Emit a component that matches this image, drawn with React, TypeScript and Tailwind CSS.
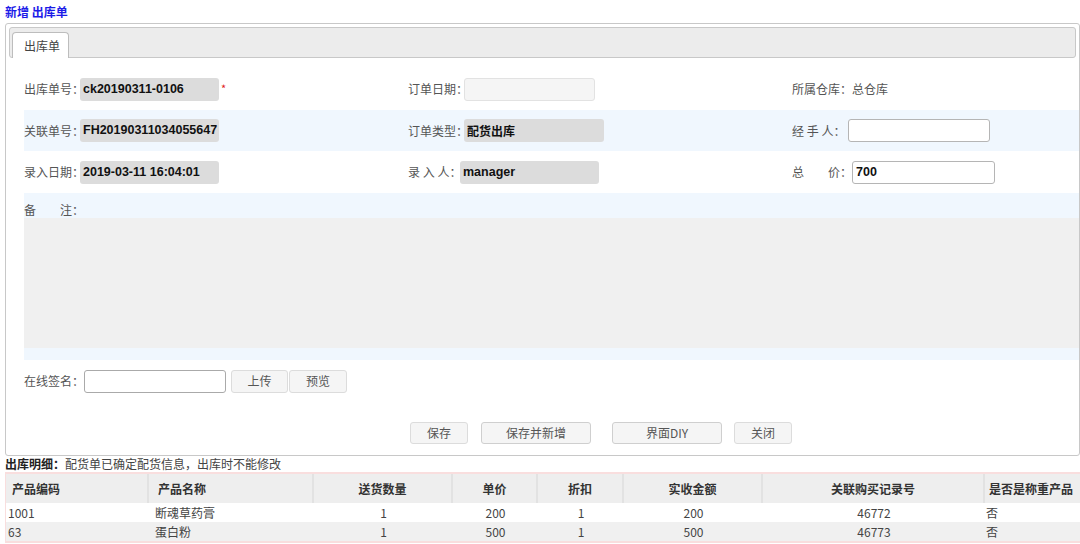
const fieldGrey = 'h-[23px] rounded-[3px] bg-[#dcdcdc] px-[3px] flex items-center font-["Liberation_Sans","Noto_Sans_CJK_SC",sans-serif] font-bold text-[12.5px] text-[#111]';
const fieldWhite = 'h-[23px] rounded-[3px] bg-white border border-[#b5b5b5] px-[3px] flex items-center font-["Liberation_Sans","Noto_Sans_CJK_SC",sans-serif] font-bold text-[12.5px] text-[#111]';

function Label({ w, children }: { w: string; children: React.ReactNode }) {
  return <span className={`${w} shrink-0 whitespace-nowrap text-[#555]`}>{children}</span>;
}

const rows = [
  { code: '1001', name: '断魂草药膏', qty: '1', price: '200', disc: '1', amount: '200', rec: '46772', weigh: '否' },
  { code: '63', name: '蛋白粉', qty: '1', price: '500', disc: '1', amount: '500', rec: '46773', weigh: '否' },
];

const cols = 'grid grid-cols-[143px_165px_139px_85px_86px_139px_222px_1fr]';

export default function App() {
  return (
    <div className="w-[1080px] h-[544px] overflow-hidden bg-white text-[12px] leading-none text-[#333] font-['Noto_Sans_CJK_SC','Noto_Sans',sans-serif]">
      <div className="h-[23px] pl-[5px] flex items-center font-bold text-[#1c1ce8]">新增 出库单</div>

      {/* main panel */}
      <div className="ml-[5px] w-[1075px] h-[433px] border border-[#c8c8c8] rounded-[3px] flex flex-col">
        <div className="mx-[3px] mt-[3px] h-[31px] border border-[#c8c8c8] rounded-[3px] bg-[#ececec] flex items-end pl-[2px]">
          <div className="w-[57px] h-[26px] -mb-px bg-white border border-[#bdbdbd] border-b-0 rounded-t-[4px] flex items-center pl-[11px] text-[#444]">
            出库单
          </div>
        </div>

        <div className="pl-[18px] pt-[10px] flex flex-col">
          <div className="h-[42px] flex items-center">
            <div className="w-[384px] flex items-center">
              <Label w="w-[56px]">出库单号：</Label>
              <div className={`${fieldGrey} w-[139px]`}>ck20190311-0106</div>
              <span className="ml-[2px] -mt-[2px] text-[#e02020] text-[11px]">*</span>
            </div>
            <div className="w-[384px] flex items-center">
              <Label w="w-[56px]">订单日期：</Label>
              <div className="w-[131px] h-[23px] rounded-[3px] bg-[#f5f5f5] border border-[#e2e2e2]" />
            </div>
            <div className="flex items-center text-[#555] whitespace-nowrap">所属仓库：总仓库</div>
          </div>

          <div className="h-[41px] flex items-center bg-[#f0f7fe]">
            <div className="w-[384px] flex items-center">
              <Label w="w-[56px]">关联单号：</Label>
              <div className={`${fieldGrey} w-[139px]`}>FH20190311034055647</div>
            </div>
            <div className="w-[384px] flex items-center">
              <Label w="w-[56px]">订单类型：</Label>
              <div className={`${fieldGrey} w-[140px] font-['Noto_Sans_CJK_SC'] text-[12px]`}>配货出库</div>
            </div>
            <div className="flex items-center">
              <Label w="w-[56px]">经 手 人：</Label>
              <div className={`${fieldWhite} w-[142px]`} />
            </div>
          </div>

          <div className="h-[42px] flex items-center">
            <div className="w-[384px] flex items-center">
              <Label w="w-[56px]">录入日期：</Label>
              <div className={`${fieldGrey} w-[139px]`}>2019-03-11 16:04:01</div>
            </div>
            <div className="w-[384px] flex items-center">
              <Label w="w-[52px]">录 入 人：</Label>
              <div className={`${fieldGrey} w-[139px]`}>manager</div>
            </div>
            <div className="flex items-center">
              <Label w="w-[60px]">总　　价：</Label>
              <div className={`${fieldWhite} w-[143px]`}>700</div>
            </div>
          </div>

          <div className="h-[167px] bg-[#f0f7fe] flex flex-col">
            <div className="h-[25px] flex items-end pb-[2px] text-[#555]">备　　注：</div>
            <div className="h-[130px] bg-[#f0f0f0]" />
          </div>

          <div className="h-[42px] flex items-center">
            <Label w="w-[60px]">在线签名：</Label>
            <div className="w-[142px] h-[23px] rounded-[3px] bg-white border border-[#aaa]" />
            <button className="ml-[5px] w-[57px] h-[23px] rounded-[3px] bg-[#f5f5f5] border border-[#dcdcdc] text-[#555]">上传</button>
            <button className="ml-[1px] w-[58px] h-[23px] rounded-[3px] bg-[#f5f5f5] border border-[#dcdcdc] text-[#555]">预览</button>
          </div>
        </div>

        <div className="mt-[20px] flex pl-[404px] text-[#555]">
          <button className="w-[58px] h-[22px] rounded-[3px] bg-[#f5f5f5] border border-[#dcdcdc]">保存</button>
          <button className="ml-[13px] w-[110px] h-[22px] rounded-[3px] bg-[#f5f5f5] border border-[#cfcfcf]">保存并新增</button>
          <button className="ml-[21px] w-[110px] h-[22px] rounded-[3px] bg-[#f5f5f5] border border-[#cfcfcf]">界面DIY</button>
          <button className="ml-[12px] w-[58px] h-[22px] rounded-[3px] bg-[#f5f5f5] border border-[#dcdcdc]">关闭</button>
        </div>
      </div>

      <div className="h-[16px] pl-[5px] flex items-center text-[#444] whitespace-nowrap">
        <span className="font-bold text-[#222]">出库明细：</span>配货单已确定配货信息，出库时不能修改
      </div>

      {/* detail table */}
      <div className="ml-[5px] border-2 border-r-0 border-[#f9dede] border-l">
        <div className={`${cols} h-[29px] bg-[#eeeeee] font-bold text-[#333]`}>
          <div className="flex items-center pl-[6px] border-r-2 border-[#e2e2e2]">产品编码</div>
          <div className="flex items-center pl-[9px] border-r-2 border-[#e2e2e2]">产品名称</div>
          <div className="flex items-center justify-center border-r-2 border-[#e2e2e2]">送货数量</div>
          <div className="flex items-center justify-center border-r-2 border-[#e2e2e2]">单价</div>
          <div className="flex items-center justify-center border-r-2 border-[#e2e2e2]">折扣</div>
          <div className="flex items-center justify-center border-r-2 border-[#e2e2e2]">实收金额</div>
          <div className="flex items-center justify-center border-r-2 border-[#e2e2e2]">关联购买记录号</div>
          <div className="flex items-center pl-[4px] whitespace-nowrap">是否是称重产品</div>
        </div>
        {rows.map((r, i) => (
          <div key={r.code} className={`${cols} h-[19px] text-[#444] ${i % 2 ? 'bg-[#f0f0f0]' : 'bg-white'}`}>
            <div className="flex items-center pl-[2px]">{r.code}</div>
            <div className="flex items-center pl-[6px]">{r.name}</div>
            <div className="flex items-center justify-center">{r.qty}</div>
            <div className="flex items-center justify-center">{r.price}</div>
            <div className="flex items-center justify-center">{r.disc}</div>
            <div className="flex items-center justify-center">{r.amount}</div>
            <div className="flex items-center justify-center">{r.rec}</div>
            <div className="flex items-center pl-[1px]">{r.weigh}</div>
          </div>
        ))}
      </div>
    </div>
  );
}
